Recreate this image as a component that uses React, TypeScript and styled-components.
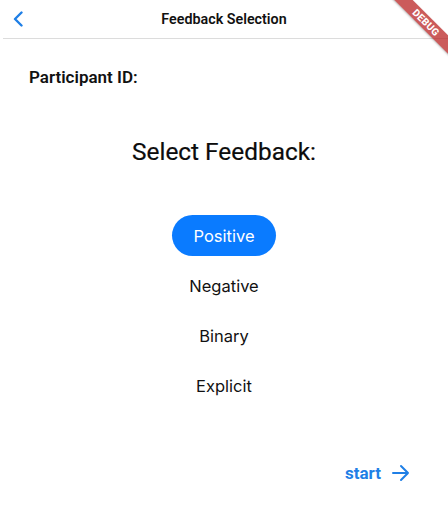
import React from "react";
import styled, { createGlobalStyle } from "styled-components";

const Global = createGlobalStyle`
  html, body { margin: 0; padding: 0; background: #ffffff; }
  body { font-family: Roboto, "Liberation Sans", sans-serif; }
`;

const Screen = styled.div`
  position: relative;
  width: 448px;
  height: 532px;
  overflow: hidden;
  background: #ffffff;
  display: flex;
  flex-direction: column;
`;

const Header = styled.header`
  height: 38px;
  margin-left: 3px;
  border-bottom: 1px solid #dcdcdc;
  display: grid;
  grid-template-columns: 40px 1fr 40px;
  align-items: center;
`;

const BackButton = styled.button`
  border: 0;
  background: none;
  padding: 0 0 0 9px;
  display: flex;
  align-items: center;
  height: 100%;
  cursor: pointer;
`;

const Title = styled.h1`
  margin: 0;
  margin-left: -3px;
  text-align: center;
  font-family: Roboto, sans-serif;
  font-size: 14.3px;
  font-weight: 600;
  color: #111;
`;

const Body = styled.main`
  flex: 1;
  display: flex;
  flex-direction: column;
`;

const Participant = styled.div`
  margin: 28px 0 0 29px;
  font-family: Roboto, sans-serif;
  font-size: 17px;
  font-weight: 600;
  color: #111;
  line-height: 20px;
`;

const Heading = styled.h2`
  margin: 50px 0 0 0;
  text-align: center;
  font-family: Roboto, sans-serif;
  font-size: 24.4px;
  font-weight: 400;
  color: #0c0c0c;
  line-height: 30px;
  -webkit-text-stroke: 0.2px #0c0c0c;
`;

const Options = styled.div`
  margin-top: 48px;
  display: flex;
  flex-direction: column;
  align-items: center;
  gap: 9px;
`;

const Option = styled.button<{ $active?: boolean }>`
  height: 41px;
  padding: 0 21px;
  border: 0;
  border-radius: 21px;
  background: ${(p) => (p.$active ? "#0a7bff" : "transparent")};
  color: ${(p) => (p.$active ? "#ffffff" : "#111")};
  font-family: Inter, "Noto Sans", sans-serif;
  font-size: 16.5px;
  font-weight: 400;
  cursor: pointer;
`;

const Footer = styled.div`
  margin-top: 57px;
  display: flex;
  justify-content: flex-end;
  padding-right: 37px;
`;

const StartButton = styled.button`
  border: 0;
  background: none;
  display: flex;
  align-items: center;
  gap: 10px;
  color: #1f7fe6;
  font-family: Roboto, sans-serif;
  font-size: 17px;
  font-weight: 700;
  padding: 0;
  cursor: pointer;
`;

const DebugBanner = styled.div`
  position: absolute;
  left: 364px;
  top: 16px;
  width: 124px;
  height: 13px;
  transform: rotate(45deg);
  background: rgba(183, 28, 28, 0.72);
  color: #fff;
  font-family: Roboto, sans-serif;
  font-size: 10px;
  font-weight: 800;
  letter-spacing: 0.3px;
  display: flex;
  align-items: center;
  justify-content: center;
  box-shadow: 0 1px 2px rgba(0,0,0,0.25);
`;

const options = ["Positive", "Negative", "Binary", "Explicit"];

export default function App() {
  return (
    <>
      <Global />
      <Screen>
        <Header>
          <BackButton aria-label="back">
            <svg width="12" height="16" viewBox="0 0 12 16">
              <path d="M9.5 1.5 L3 8 L9.5 14.5" fill="none" stroke="#1f7fe6" strokeWidth="2.4" strokeLinecap="round" strokeLinejoin="round" />
            </svg>
          </BackButton>
          <Title>Feedback Selection</Title>
          <span />
        </Header>
        <Body>
          <Participant>Participant ID:</Participant>
          <Heading>Select Feedback:</Heading>
          <Options>
            {options.map((o, i) => (
              <Option key={o} $active={i === 0}>{o}</Option>
            ))}
          </Options>
          <Footer>
            <StartButton>
              start
              <svg width="20" height="18" viewBox="0 0 20 18">
                <path d="M2 9 H17 M10 2 L17 9 L10 16" fill="none" stroke="#1f7fe6" strokeWidth="2" strokeLinecap="round" strokeLinejoin="round" />
              </svg>
            </StartButton>
          </Footer>
        </Body>
        <DebugBanner>DEBUG</DebugBanner>
      </Screen>
    </>
  );
}
